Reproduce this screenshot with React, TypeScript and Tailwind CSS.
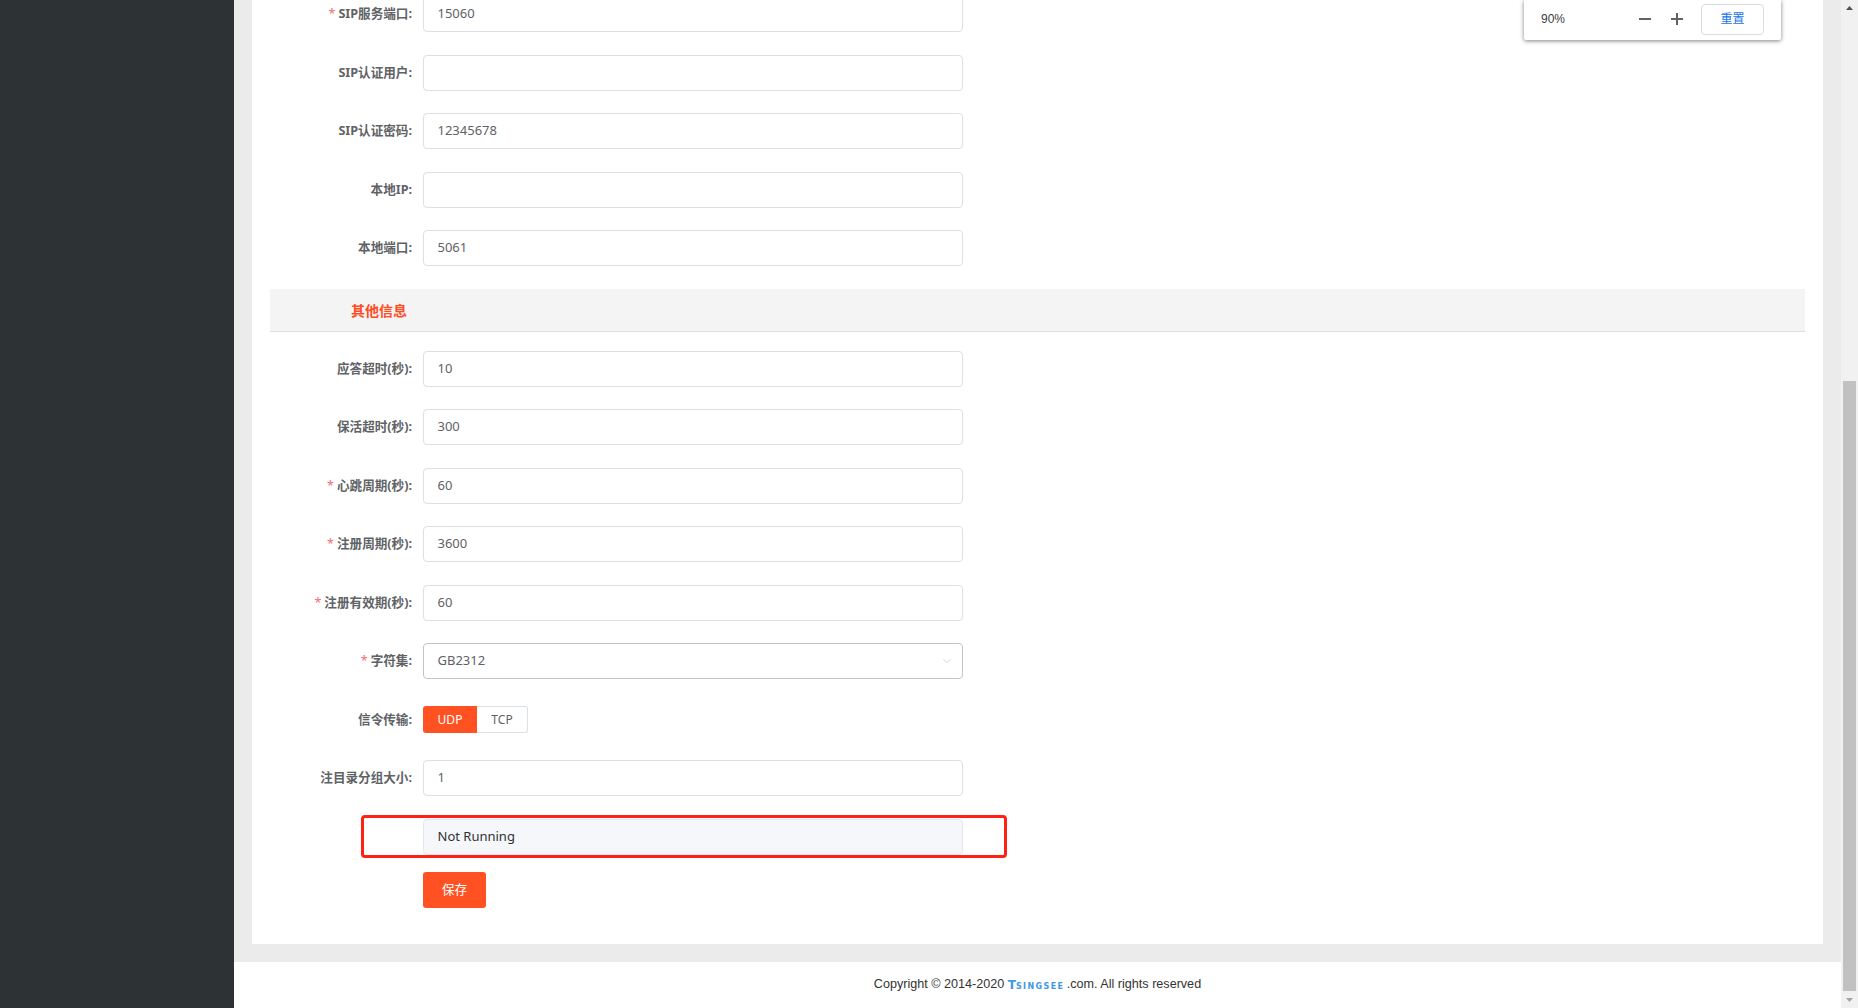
import { ChevronDown } from "lucide-react";

const font = "font-['Noto_Sans','Noto_Sans_CJK_SC',sans-serif]";

function Label({ text, required }: { text: string; required?: boolean }) {
  return (
    <label className="w-[143px] shrink-0 pr-[1px] pt-[1px] text-right text-[12.6px] font-bold text-[#606266]">
      {required && <span className="mr-[3px] font-normal text-[#f56c6c]">*</span>}
      {text}
    </label>
  );
}

function Field({ label, value, required }: { label: string; value?: string; required?: boolean }) {
  return (
    <div className="mb-[22.5px] flex h-9 items-center gap-[10px]">
      <Label text={label} required={required} />
      <div className="flex h-9 w-[540px] items-center rounded-[4px] border border-[#dcdfe6] bg-white px-[13.5px] text-[13px] text-[#606266]">
        {value}
      </div>
    </div>
  );
}

export default function App() {
  return (
    <div className={`flex h-[1008px] w-[1858px] overflow-hidden bg-white ${font}`}>
      <aside className="w-[234px] shrink-0 bg-[#2d3235]" />

      <div className="flex w-[1607px] shrink-0 flex-col">
        <main className="h-[962px] shrink-0 bg-[#ebebeb] pl-[18px] pr-[18px]">
          <div className="relative h-[944px] overflow-hidden bg-white px-[18px]">
            <div className="-mt-[4px]">
              <Field label="SIP服务端口:" value="15060" required />
              <Field label="SIP认证用户:" />
              <Field label="SIP认证密码:" value="12345678" />
              <Field label="本地IP:" />
              <Field label="本地端口:" value="5061" />

              <div className="mb-[18.5px] flex h-[43.5px] items-center border-b border-[#dcdfe6] bg-[#f4f4f4] pl-[81px] pt-[1px] text-[14px] font-bold text-[#ff4a22]">
                其他信息
              </div>

              <Field label="应答超时(秒):" value="10" />
              <Field label="保活超时(秒):" value="300" />
              <Field label="心跳周期(秒):" value="60" required />
              <Field label="注册周期(秒):" value="3600" required />
              <Field label="注册有效期(秒):" value="60" required />

              <div className="mb-[22.5px] flex h-9 items-center gap-[10px]">
                <Label text="字符集:" required />
                <div className="flex h-9 w-[540px] items-center justify-between rounded-[4px] border border-[#c0c4cc] bg-white pl-[13.5px] pr-[8px] text-[13px] text-[#606266]">
                  GB2312
                  <ChevronDown size={14} strokeWidth={1.25} className="text-[#c0c4cc]" />
                </div>
              </div>

              <div className="mb-[22.5px] flex h-9 items-center gap-[10px]">
                <Label text="信令传输:" />
                <div className="flex h-[27px] text-[12px]">
                  <div className="flex w-[54px] items-center justify-center rounded-l-[3px] bg-[#ff5122] text-white">UDP</div>
                  <div className="flex w-[51px] items-center justify-center rounded-r-[3px] border border-l-0 border-[#dcdfe6] text-[#606266]">TCP</div>
                </div>
              </div>

              <Field label="注目录分组大小:" value="1" />

              <div className="relative mb-[17px] ml-[153px] mt-[23px] flex h-9 w-[540px] items-center rounded-[4px] border border-[#e4e7ed] bg-[#f5f7fa] px-[13.5px] text-[13px] text-[#303133]">
                Not Running
                {/* annotation drawn on the screenshot */}
                <div className="absolute -left-[63px] -top-[5px] h-[43px] w-[646px] rounded-[4px] border-[3px] border-[#ff2016]" />
              </div>

              <button className="ml-[153px] h-9 w-[63px] rounded-[3px] bg-[#ff5122] text-[12.6px] text-white">保存</button>
            </div>

            {/* browser zoom popup lying over the page */}
            <div className="absolute right-[42px] top-0 flex h-[40px] w-[257px] items-center rounded-b-[2px] bg-white pl-[17px] text-[12px] text-[#3c4043] shadow-[0_1px_4px_rgba(0,0,0,0.5)]">
              <span className="-mt-[2px] w-[98px] font-['Liberation_Sans','Noto_Sans_CJK_SC',sans-serif]">90%</span>
              <span className="-mt-[3px] h-[2px] w-[12px] bg-[#5f6368]" />
              <span className="relative -mt-[2px] ml-[20px] h-[12px] w-[12px]">
                <span className="absolute left-0 top-[5px] h-[2px] w-[12px] bg-[#5f6368]" />
                <span className="absolute left-[5px] top-0 h-[12px] w-[2px] bg-[#5f6368]" />
              </span>
              <div className="-mt-[2px] ml-[18px] flex h-[31px] w-[63px] items-center justify-center rounded-[4px] border border-[#dadce0] text-[#1a73e8]">
                重置
              </div>
            </div>
          </div>
        </main>

        <footer className="flex h-[46px] items-center justify-center pb-[1px] font-['Liberation_Sans','Noto_Sans_CJK_SC',sans-serif] text-[12.6px] text-[#333]">
          Copyright © 2014-2020&nbsp;
          <span className="flex w-[59px] items-baseline font-['DejaVu_Sans',sans-serif] font-bold text-[#3f97e8]">
            <span className="text-[12px] leading-none">T</span>
            <span className="text-[8px] leading-none tracking-[1.4px]">SINGSEE</span>
          </span>
          .com. All rights reserved
        </footer>
      </div>

      {/* page scrollbar */}
      <div className="relative w-[17px] shrink-0 bg-[#f1f1f1]">
        <svg className="absolute left-[4px] top-[5px]" width="9" height="6" viewBox="0 0 9 6">
          <path d="M4.5 1 8 5H1z" fill="#505050" />
        </svg>
        <div className="absolute left-[2px] top-[381px] h-[610px] w-[13px] bg-[#c1c1c1]" />
        <svg className="absolute bottom-[5px] left-[4px]" width="9" height="6" viewBox="0 0 9 6">
          <path d="M1 1h7L4.5 5z" fill="#a3a3a3" />
        </svg>
      </div>
    </div>
  );
}
